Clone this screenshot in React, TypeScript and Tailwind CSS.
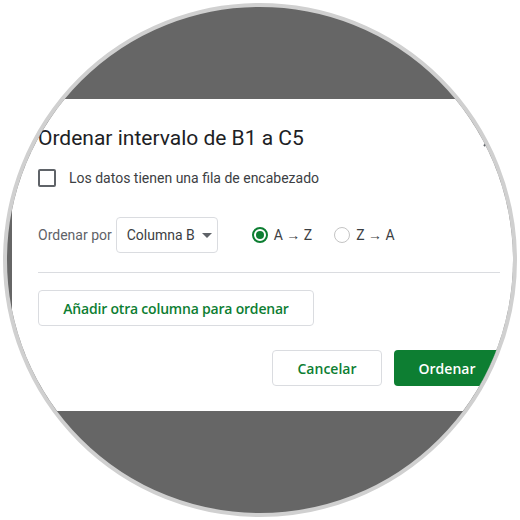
import React from "react";

const F = { fontFamily: "Roboto, 'Liberation Sans', sans-serif" };
const G = { fontFamily: "'Open Sans', Roboto, sans-serif" };

export default function App() {
  return (
    <div className="w-[520px] h-[520px] bg-white pt-[3px] pl-[3px]" style={F}>
      <div className="w-[514px] h-[514px] rounded-full border-[4px] border-[#d0d0d0] overflow-hidden bg-[#666666] flex flex-col">
        <div className="h-[92px] shrink-0" />
        <div className="h-[312px] shrink-0 ml-[5px] w-[520px] bg-white pl-[26px] pr-[0px] pt-[23px] flex flex-col">
          <div className="flex items-center h-[32px] w-[462px]">
            <div className="text-[21px] leading-[32px] text-[#202124]" style={F}>
              Ordenar intervalo de B1 a C5
            </div>
            <svg className="ml-auto mr-[3px] mt-[4px]" width="14" height="14" viewBox="0 0 14 14">
              <path d="M1 1 L13 13 M13 1 L1 13" stroke="#5f6368" strokeWidth="2" />
            </svg>
          </div>
          <div className="mt-[12px] h-[24px] flex items-center">
            <div className="w-[18px] h-[18px] border-2 border-[#5f6368] rounded-[2px] ml-[0px]" />
            <span className="ml-[13px] text-[14px] text-[#3c4043]">Los datos tienen una fila de encabezado</span>
          </div>
          <div className="mt-[27px] h-[36px] flex items-center">
            <span className="text-[14px] text-[#5f6368]">Ordenar por</span>
            <div className="ml-[4px] w-[102px] h-[36px] border border-[#dadce0] rounded-[4px] flex items-center pl-[10px]">
              <span className="text-[14px] text-[#3c4043]">Columna B</span>
              <svg className="ml-[7px]" width="10" height="5" viewBox="0 0 10 5">
                <path d="M0 0 L10 0 L5 5 Z" fill="#5f6368" />
              </svg>
            </div>
            <div className="ml-[34px] w-[16px] h-[16px] rounded-full border-2 border-[#0d7e32] flex items-center justify-center">
              <div className="w-[8px] h-[8px] rounded-full bg-[#0d7e32]" />
            </div>
            <span className="ml-[6px] text-[14px] text-[#3c4043]">A → Z</span>
            <div className="ml-[22px] w-[16px] h-[16px] rounded-full border-[1.5px] border-[#c4c4c4]" />
            <span className="ml-[6px] text-[14px] text-[#3c4043]">Z → A</span>
          </div>
          <div className="mt-[19px] h-px w-[462px] bg-[#dadce0]" />
          <div className="mt-[17px] w-[276px] h-[36px] border border-[#dadce0] rounded-[4px] flex items-center justify-center text-[14px] font-semibold tracking-[-0.2px] text-[#0d7e32]" style={G}>
            Añadir otra columna para ordenar
          </div>
          <div className="mt-[24px] flex w-[462px] justify-end gap-[12px]">
            <div className="w-[110px] h-[36px] border border-[#dadce0] rounded-[4px] flex items-center justify-center text-[14px] font-semibold text-[#0d7e32]" style={G}>
              Cancelar
            </div>
            <div className="w-[106px] h-[36px] rounded-[4px] bg-[#0d7e32] flex items-center justify-center text-[14px] font-semibold text-white" style={G}>
              Ordenar
            </div>
          </div>
        </div>
        <div className="flex-1" />
      </div>
    </div>
  );
}
